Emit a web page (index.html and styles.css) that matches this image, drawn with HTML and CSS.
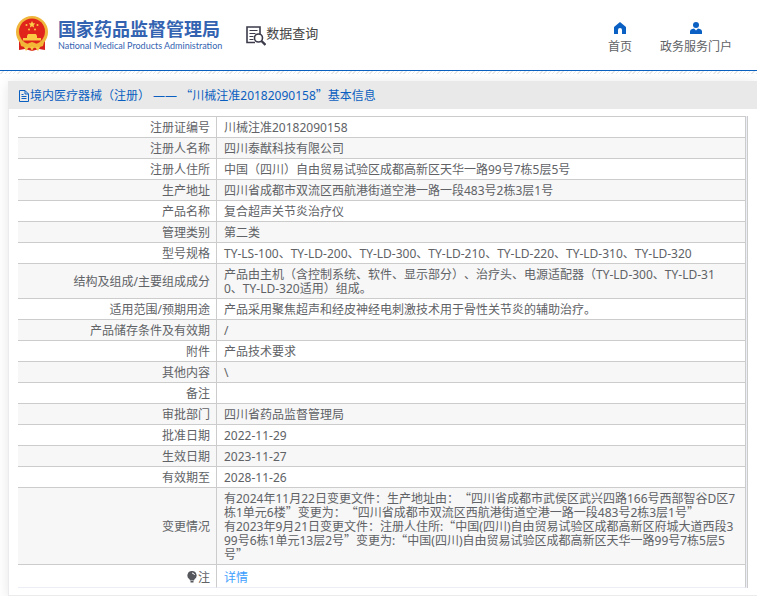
FILE: index.html
```html
<!DOCTYPE html>
<html lang="zh-CN">
<head>
  <meta charset="utf-8">
  <title>数据查询</title>
  <link rel="stylesheet" href="styles.css">
</head>
<body>

<!-- Header -->
<header class="header">
  <a class="logo" href="#">
    <svg class="emblem" viewBox="0 0 32 36">
      <path d="M3 23h26v11l-6-1-7 2-7-2-6 1z" fill="#d8201c"/>
      <circle cx="16" cy="16" r="16" fill="#f0b63c"/>
      <circle cx="16" cy="15.500" r="13" fill="#e0241c"/>
      <path d="M16 5l1 2.200 2.400.2-1.800 1.600.5 2.400-2.100-1.200-2.100 1.200.5-2.400-1.800-1.600 2.400-.2z" fill="#fbd04a"/>
      <g fill="#fbc943"><circle cx="10.500" cy="9" r="1"/><circle cx="21.500" cy="9" r="1"/><circle cx="13" cy="13.500" r="1"/><circle cx="19" cy="13.500" r="1"/></g>
      <path d="M12 18h8l1 2h-10zM11 20h10v2h-10zM7 22h18v2.500h-18z" fill="#fbc943"/>
      <path d="M4 26q6 4 9 1l3-1 3 1q3 3 9-1l-1 4q-5 2-8 1l-3 1-3-1q-3 1-8-1z" fill="#f3b735"/>
      <path d="M8 31l5 0-3 4zM24 31l-5 0 3 4zM14 31h4l-2 4z" fill="#f6c544"/>
    </svg>
    <span class="logo-text">
      <span class="logo-cn">国家药品监督管理局</span>
      <span class="logo-en">National Medical Products Administration</span>
    </span>
  </a>
  <a class="query" href="#">
    <svg class="query-icon" viewBox="0 0 20 20" fill="none" stroke="#3b3b4b">
      <path d="M9 16.500H1V1h13v7" stroke-width="1.600"/>
      <path d="M3.500 4.500h8M3.500 7.500h6M3.500 10.500h4M3.500 13.500h4" stroke-width="1"/>
      <circle cx="12.500" cy="12" r="4" stroke-width="1.600"/>
      <path d="M15.500 15l4 4" stroke-width="2.400"/>
    </svg>
    <span>数据查询</span>
  </a>
  <nav class="nav">
    <a href="#">
      <svg class="nav-icon" viewBox="0 0 12 12"><path d="M6 0L0 5v7h4V8q0-2 2-2t2 2v4h4V5z"/></svg>
      首页
    </a>
    <a href="#">
      <svg class="nav-icon" viewBox="0 0 12 12"><circle cx="6" cy="3" r="3"/><path d="M0 12V9.500Q0 7 4 6.500L6 8.500 8 6.500q4 .5 4 3V12z"/></svg>
      政务服务门户
    </a>
  </nav>
</header>
<div class="hatch"></div>

<!-- Detail -->
<main class="card">
  <h1 class="card-title">
    <svg class="doc-icon" viewBox="0 0 12 12" fill="none" stroke="#0b5fc0"><path d="M1.500.5h5.500l3.500 3.500v7.500h-9zM7 .5v3.500h3.500M3.500 4.500h2M3.500 6.500h5M3.500 8.500h5"/></svg>
    <span>境内医疗器械（注册） —— <span class="q">“</span>川械注准20182090158<span class="q">”</span>基本信息</span>
  </h1>
  <div class="table-wrap">
    <table>
      <tbody>
        <tr><th scope="row">注册证编号</th><td>川械注准20182090158</td></tr>
        <tr><th scope="row">注册人名称</th><td>四川泰猷科技有限公司</td></tr>
        <tr><th scope="row">注册人住所</th><td>中国（四川）自由贸易试验区成都高新区天华一路99号7栋5层5号</td></tr>
        <tr><th scope="row">生产地址</th><td>四川省成都市双流区西航港街道空港一路一段483号2栋3层1号</td></tr>
        <tr><th scope="row">产品名称</th><td>复合超声关节炎治疗仪</td></tr>
        <tr><th scope="row">管理类别</th><td>第二类</td></tr>
        <tr><th scope="row">型号规格</th><td>TY-LS-100、TY-LD-200、TY-LD-300、TY-LD-210、TY-LD-220、TY-LD-310、TY-LD-320</td></tr>
        <tr><th scope="row">结构及组成/主要组成成分</th><td>产品由主机（含控制系统、软件、显示部分）、治疗头、电源适配器（TY-LD-300、TY-LD-31<br>0、TY-LD-320适用）组成。</td></tr>
        <tr><th scope="row">适用范围/预期用途</th><td>产品采用聚焦超声和经皮神经电刺激技术用于骨性关节炎的辅助治疗。</td></tr>
        <tr><th scope="row">产品储存条件及有效期</th><td>/</td></tr>
        <tr><th scope="row">附件</th><td>产品技术要求</td></tr>
        <tr><th scope="row">其他内容</th><td>\</td></tr>
        <tr><th scope="row">备注</th><td></td></tr>
        <tr><th scope="row">审批部门</th><td>四川省药品监督管理局</td></tr>
        <tr><th scope="row">批准日期</th><td>2022-11-29</td></tr>
        <tr><th scope="row">生效日期</th><td>2023-11-27</td></tr>
        <tr><th scope="row">有效期至</th><td>2028-11-26</td></tr>
        <tr><th scope="row">变更情况</th><td>有2024年11月22日变更文件：生产地址由：<span class="q">“</span>四川省成都市武侯区武兴四路166号西部智谷D区7栋1单元6楼<span class="q">”</span>变更为：<span class="q">“</span>四川省成都市双流区西航港街道空港一路一段483号2栋3层1号<span class="q">”</span><br>有2023年9月21日变更文件：注册人住所:<span class="q">“</span>中国(四川)自由贸易试验区成都高新区府城大道西段399号6栋1单元13层2号<span class="q">”</span>变更为:<span class="q">“</span>中国(四川)自由贸易试验区成都高新区天华一路99号7栋5层5号<span class="q">”</span></td></tr>
        <tr class="note"><th scope="row"><svg class="bulb" viewBox="0 0 10 12"><path d="M5 0a4.500 4.500 0 0 1 2.500 8.300L7 9.500H3L2.500 8.300A4.500 4.500 0 0 1 5 0zM3.500 10h3v1.500h-3z" fill="#55575c"/><path d="M5 2q2 0 2.500 2" stroke="#fff" fill="none"/></svg>注</th><td><a href="#">详情</a></td></tr>
      </tbody>
    </table>
  </div>
</main>

</body>
</html>
```
FILE: styles.css
```css
body {
  margin: 0;
  background: #fff;
  color: #606266;
  font: 12px/14px "Noto Sans", "Noto Sans CJK SC", sans-serif;
  text-spacing-trim: space-all;
}
a { color: inherit; text-decoration: none; }
svg { display: block; }

/* full-width Chinese quotes */
.q { font-family: "Noto Sans CJK SC", sans-serif; line-height: 0; }

.header {
  display: flex;
  align-items: center;
  height: 70px;
  padding: 0 25px 0 16px;
  border-bottom: 1px solid #0b60bf;
}
.logo { display: flex; align-items: center; gap: 10px; color: #3463b1; }
.emblem { width: 32px; height: 36px; margin-top: -2px; }
.logo-text { display: flex; flex-direction: column; white-space: nowrap; }
.logo-cn { font-size: 18px; line-height: 22px; font-weight: 700; }
.logo-en { font: 400 9px/12px Lato, sans-serif; }
.query { display: flex; align-items: flex-start; margin-left: 24px; color: #444; font-size: 13px; }
.query span { margin-top: 2px; }
.query-icon { width: 20px; height: 20px; margin-top: 2px; }
.nav { display: flex; gap: 28px; margin: 5px 0 0 auto; }
.nav a { display: flex; flex-direction: column; align-items: center; gap: 6px; }
.nav-icon { width: 12px; height: 12px; fill: #0b60c4; }

.hatch {
  height: 3px;
  background: repeating-linear-gradient(135deg, #fff 0 2px, #e8e8e8 2px 3px);
}

.card {
  margin: 7px 0 0 8px;
  padding-bottom: 7px;
  border: 1px solid #ebebed;
  border-width: 0 0 1px 1px;
  box-shadow: 0 2px 12px rgba(0, 0, 0, 0.1);
}
.card-title {
  display: flex;
  align-items: center;
  height: 27px;
  margin: 0 0 7px -1px;
  padding: 1px 0 0 10px;
  background: #e9e9e9;
  color: #0b5fc0;
  font-size: 12px;
  font-weight: 400;
}
.doc-icon { width: 12px; height: 12px; }

.table-wrap {
  margin: 0 9px 0 9px;
  padding-right: 1px;
  border-right: 1px solid #ccc;
  background: #ebeef5;
}
table { width: 100%; border-collapse: separate; border-spacing: 0; border-top: 1px solid #ccc; }
tr { background: #fff; }
tr:nth-child(even) { background: #f7f7f7; }
th, td {
  height: 14px;
  padding: 4px 6px 2px;
  border-right: 1px solid #ccc;
  border-bottom: 1px solid #ccc;
  font-weight: 400;
  word-break: break-all;
}
th { width: 186px; text-align: right; }
td { padding-left: 7px; text-align: left; }
.note th, .note td { padding-top: 6px; border-bottom-color: #ebeef5; }
.note a { color: #409eff; }
.bulb { display: inline-block; width: 10px; height: 12px; margin-right: 1px; vertical-align: -1px; }
```
